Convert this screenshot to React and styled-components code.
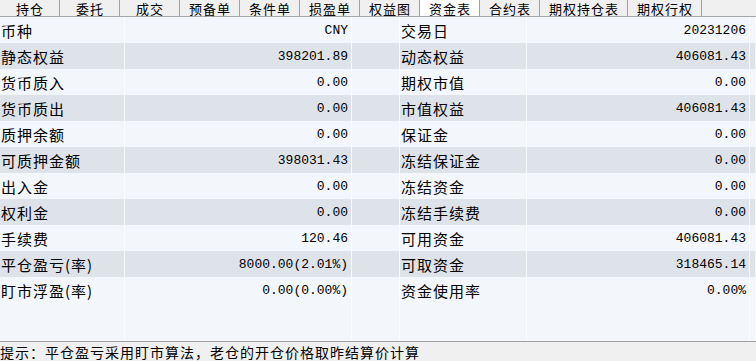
import React from 'react';
import styled, { createGlobalStyle } from 'styled-components';

const GlobalStyle = createGlobalStyle`
  html, body {
    margin: 0;
    padding: 0;
    background: #f0f0f0;
    overflow: hidden;
  }
`;

const TABS = [
  '持仓',
  '委托',
  '成交',
  '预备单',
  '条件单',
  '损盈单',
  '权益图',
  '资金表',
  '合约表',
  '期权持仓表',
  '期权行权',
];

const ROWS = [
  ['币种', 'CNY', '交易日', '20231206'],
  ['静态权益', '398201.89', '动态权益', '406081.43'],
  ['货币质入', '0.00', '期权市值', '0.00'],
  ['货币质出', '0.00', '市值权益', '406081.43'],
  ['质押余额', '0.00', '保证金', '0.00'],
  ['可质押金额', '398031.43', '冻结保证金', '0.00'],
  ['出入金', '0.00', '冻结资金', '0.00'],
  ['权利金', '0.00', '冻结手续费', '0.00'],
  ['手续费', '120.46', '可用资金', '406081.43'],
  ['平仓盈亏(率)', '8000.00(2.01%)', '可取资金', '318465.14'],
  ['盯市浮盈(率)', '0.00(0.00%)', '资金使用率', '0.00%'],
  ['', '', '', ''],
  ['', '', '', ''],
];

const App = () => {
  return (
    <Page>
      <GlobalStyle />
      <TabBar>
        {TABS.map(tab => (
          <Tab key={tab} $active={tab === '资金表'}>
            {tab}
          </Tab>
        ))}
      </TabBar>
      <Table>
        {ROWS.map((row, i) => (
          <Row key={i} $alt={i % 2 === 1 && row[0] !== ''}>
            <Label>{row[0]}</Label>
            <Value>{row[1]}</Value>
            <Cell />
            <Label>{row[2]}</Label>
            <Value>{row[3]}</Value>
            <Cell />
          </Row>
        ))}
      </Table>
      <StatusBar>提示：平仓盈亏采用盯市算法，老仓的开仓价格取昨结算价计算</StatusBar>
    </Page>
  );
};

export default App;

const Page = styled.div`
  width: 756px;
  height: 361px;
  display: flex;
  flex-direction: column;
  overflow: hidden;
  background: #f0f0f0;
`;

const TabBar = styled.div`
  display: flex;
  height: 16px;
  border-bottom: 1px solid #a7a7a7;
  background: #f0f0f0;
  flex-shrink: 0;
`;

const Tab = styled.div`
  box-sizing: border-box;
  min-width: 60px;
  padding: 0 8px 0 9px;
  height: 16px;
  display: flex;
  align-items: center;
  justify-content: center;
  border-right: 1px solid #a0a0a0;
  background: ${p => (p.$active ? '#ffffff' : '#f0f0f0')};
  font-family: 'Noto Sans CJK SC', sans-serif;
  font-size: 13px;
  letter-spacing: 1px;
  line-height: 1;
  color: #000;
  white-space: nowrap;
`;

const Table = styled.div`
  flex: 1;
  overflow: hidden;
  background: #f3f6fa;
`;

const Row = styled.div`
  display: grid;
  grid-template-columns: 125px 227px 48px 127px 223px 1fr;
  height: 26px;
  background: ${p => (p.$alt ? '#dee3ea' : '#f3f6fa')};
`;

const Cell = styled.div`
  display: flex;
  align-items: center;
  border-right: 1px solid rgba(255, 255, 255, 0.75);
  overflow: hidden;
  white-space: nowrap;
  color: #000;
`;

const Label = styled(Cell)`
  padding-left: 1px;
  font-family: 'Noto Sans CJK SC', sans-serif;
  font-size: 15px;
  letter-spacing: 1px;
`;

const Value = styled(Cell)`
  justify-content: flex-end;
  padding-right: 3px;
  font-family: 'Liberation Mono', monospace;
  font-size: 13px;
`;

const StatusBar = styled.div`
  height: 19px;
  flex-shrink: 0;
  border-top: 1px solid #a0a0a0;
  background: #f0f0f0;
  display: flex;
  align-items: center;
  font-family: 'Noto Sans CJK SC', sans-serif;
  font-size: 14px;
  letter-spacing: 1px;
  line-height: 1;
  color: #000;
  white-space: nowrap;
`;
